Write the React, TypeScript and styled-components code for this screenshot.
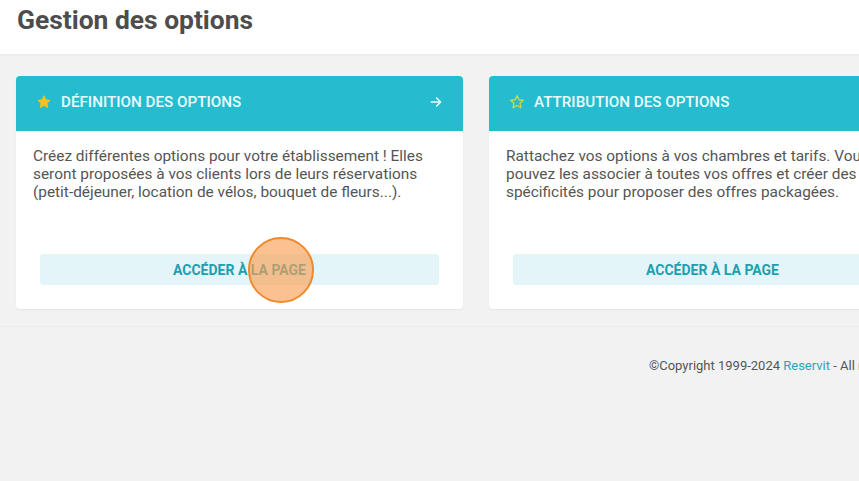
import React from "react";
import styled, { createGlobalStyle } from "styled-components";

const GlobalStyle = createGlobalStyle`
  html, body {
    margin: 0;
    padding: 0;
    background: #f2f2f2;
    overflow: hidden;
  }
  body {
    font-family: Roboto, "Liberation Sans", Arial, sans-serif;
    color: #555;
  }
`;

const Page = styled.div`
  width: 1400px;
  min-height: 481px;
  background: #f2f2f2;
  position: relative;
`;

const Header = styled.header`
  height: 54px;
  background: #fff;
  border-bottom: 2px solid #ececec;
  padding: 0 17px;
  display: flex;
  align-items: flex-start;
`;

const Title = styled.h1`
  margin: 3px 0 0;
  font-size: 26.4px;
  line-height: 34px;
  font-weight: 700;
  color: #4d4d4d;
`;

const Content = styled.main`
  padding: 20px 16px 17px;
  border-bottom: 1px solid #ebebeb;
`;

const CardRow = styled.div`
  display: flex;
  gap: 26px;
`;

const Card = styled.section`
  width: 447px;
  height: 233px;
  background: #fff;
  border-radius: 4px;
  box-shadow: 0 1px 2px rgba(0, 0, 0, 0.06);
  display: flex;
  flex-direction: column;
  overflow: hidden;
`;

const CardHeader = styled.div`
  height: 55px;
  box-sizing: border-box;
  background: #25bccf;
  display: flex;
  align-items: center;
  padding: 0 20px 3px 20px;
  gap: 9px;
`;

const CardTitle = styled.h2`
  margin: 0;
  flex: 1;
  font-size: 15.2px;
  line-height: 18px;
  font-weight: 500;
  color: #eafcff;
`;

const CardBody = styled.div`
  flex: 1;
  display: flex;
  flex-direction: column;
  padding: 16px 17px 24px;
`;

const CardText = styled.p`
  margin: 0;
  font-size: 15.4px;
  line-height: 18px;
  color: #555;
`;

const PageButton = styled.button`
  margin: auto 7px 0;
  height: 31px;
  border: none;
  border-radius: 3px;
  background: #e3f5f9;
  color: #1e9fb0;
  font-family: inherit;
  font-size: 14px;
  font-weight: 700;
  text-transform: uppercase;
  cursor: pointer;
`;

const Footer = styled.footer`
  padding: 31px 0 0 649px;
  font-size: 13px;
  color: #555;
  white-space: nowrap;
`;

const FooterLink = styled.a`
  color: #2aa5b8;
  text-decoration: none;
`;

const ClickMarker = styled.span`
  position: absolute;
  left: 248px;
  top: 237px;
  width: 62px;
  height: 62px;
  border-radius: 50%;
  background: rgba(250, 160, 85, 0.65);
  border: 2px solid #f0892c;
  pointer-events: none;
`;

const Star = ({ filled }: { filled: boolean }) => (
  <svg width="16" height="16" viewBox="0 0 24 24">
    <path
      d="M12 2.5l2.9 6.1 6.6.8-4.9 4.6 1.3 6.6L12 17.3l-5.9 3.3 1.3-6.6-4.9-4.6 6.6-.8z"
      fill={filled ? "#f7c21b" : "none"}
      stroke={filled ? "#f7c21b" : "#c9d84a"}
      strokeWidth={filled ? 1 : 2}
      strokeLinejoin="round"
    />
  </svg>
);

const Arrow = () => (
  <svg width="14" height="14" viewBox="0 0 24 24" fill="none" stroke="#eafcff" strokeWidth="2.6" strokeLinecap="round" strokeLinejoin="round">
    <path d="M4 12h16M13 5l7 7-7 7" />
  </svg>
);

type OptionCardProps = {
  title: string;
  text: string;
  filled: boolean;
  arrow?: boolean;
};

const OptionCard = ({ title, text, filled, arrow }: OptionCardProps) => (
  <Card>
    <CardHeader>
      <Star filled={filled} />
      <CardTitle>{title}</CardTitle>
      {arrow && <Arrow />}
    </CardHeader>
    <CardBody>
      <CardText>{text}</CardText>
      <PageButton>Accéder à la page</PageButton>
    </CardBody>
  </Card>
);

export default function App() {
  return (
    <Page>
      <GlobalStyle />
      <Header>
        <Title>Gestion des options</Title>
      </Header>
      <Content>
        <CardRow>
          <OptionCard
            title="DÉFINITION DES OPTIONS"
            filled
            arrow
            text="Créez différentes options pour votre établissement ! Elles seront proposées à vos clients lors de leurs réservations (petit-déjeuner, location de vélos, bouquet de fleurs...)."
          />
          <OptionCard
            title="ATTRIBUTION DES OPTIONS"
            filled={false}
            text="Rattachez vos options à vos chambres et tarifs. Vous pouvez les associer à toutes vos offres et créer des spécificités pour proposer des offres packagées."
          />
        </CardRow>
      </Content>
      <Footer>
        ©Copyright 1999-2024 <FooterLink href="#">Reservit</FooterLink> - All rights reserved
      </Footer>
      <ClickMarker />
    </Page>
  );
}
